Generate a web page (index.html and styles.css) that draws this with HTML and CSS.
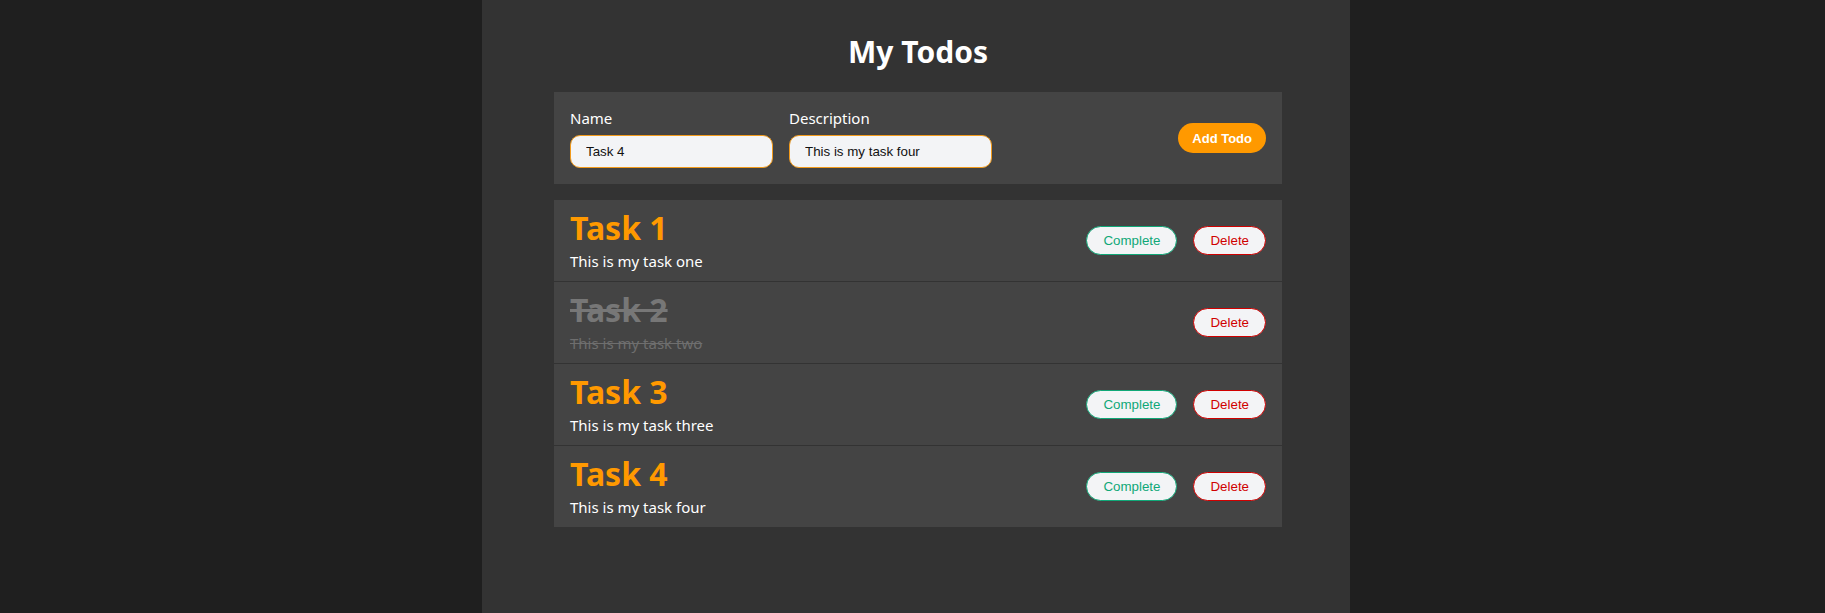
FILE: index.html
```html
<!DOCTYPE html>
<html lang="en">
<head>
<meta charset="utf-8">
<title>My Todos</title>
<link rel="stylesheet" href="styles.css">
</head>
<body>
<main class="page">
  <h1 class="title">My Todos</h1>
  <form class="add-form">
    <label class="field">
      <span class="field-label">Name</span>
      <input class="field-input" type="text" value="Task 4">
    </label>
    <label class="field">
      <span class="field-label">Description</span>
      <input class="field-input" type="text" value="This is my task four">
    </label>
    <button class="btn-add" type="button">Add Todo</button>
  </form>
  <ul class="todo-list">
    <li class="todo">
      <div class="todo-text">
        <div class="todo-name">Task 1</div>
        <div class="todo-desc">This is my task one</div>
      </div>
      <div class="todo-actions">
        <button class="btn btn-complete" type="button">Complete</button>
        <button class="btn btn-delete" type="button">Delete</button>
      </div>
    </li>
    <li class="todo done">
      <div class="todo-text">
        <div class="todo-name">Task 2</div>
        <div class="todo-desc">This is my task two</div>
      </div>
      <div class="todo-actions">
        <button class="btn btn-delete" type="button">Delete</button>
      </div>
    </li>
    <li class="todo">
      <div class="todo-text">
        <div class="todo-name">Task 3</div>
        <div class="todo-desc">This is my task three</div>
      </div>
      <div class="todo-actions">
        <button class="btn btn-complete" type="button">Complete</button>
        <button class="btn btn-delete" type="button">Delete</button>
      </div>
    </li>
    <li class="todo">
      <div class="todo-text">
        <div class="todo-name">Task 4</div>
        <div class="todo-desc">This is my task four</div>
      </div>
      <div class="todo-actions">
        <button class="btn btn-complete" type="button">Complete</button>
        <button class="btn btn-delete" type="button">Delete</button>
      </div>
    </li>
  </ul>
</main>
</body>
</html>
```

FILE: styles.css
```css
* { box-sizing: border-box; }

html, body {
  margin: 0;
  padding: 0;
  background: #1f1f1f;
  font-family: "Noto Sans", Lato, sans-serif;
  color: #ffffff;
}

.page {
  width: 868px;
  min-height: 100vh;
  margin-left: calc(50% - 430.5px);
  padding: 34px 68px 0 72px;
  background: #333333;
}

.title {
  margin: 0 0 22px;
  font-size: 30px;
  line-height: 36px;
  font-weight: 700;
  text-align: center;
  color: #ffffff;
}

.add-form {
  display: flex;
  align-items: center;
  padding: 16px;
  background: #444444;
  margin: 0;
}

.field {
  display: flex;
  flex-direction: column;
  gap: 7px;
}

.field + .field { margin-left: 16px; }

.field-label {
  font-size: 15px;
  line-height: 20px;
  color: #ffffff;
}

.field-input {
  width: 203px;
  height: 33px;
  padding: 0 15px;
  border: 1px solid #f29a1a;
  border-radius: 10px;
  background: #f3f4f6;
  font-family: "Liberation Sans", Arial, sans-serif;
  font-size: 13.333px;
  color: #111111;
  outline: none;
}

.btn-add {
  margin-left: auto;
  height: 30px;
  padding: 0 14px;
  border: none;
  border-radius: 15px;
  background: #ff9900;
  color: #ffffff;
  font-family: "Liberation Sans", Arial, sans-serif;
  font-size: 13px;
  font-weight: 700;
  cursor: pointer;
}

.todo-list {
  list-style: none;
  margin: 16px 0 0;
  padding: 0;
}

.todo {
  display: flex;
  align-items: center;
  justify-content: space-between;
  height: 81px;
  padding: 10px 16px;
  background: #444444;
}

.todo + .todo { border-top: 1px solid #333333; height: 82px; }

.todo-name {
  font-size: 32px;
  line-height: 36px;
  font-weight: 700;
  color: #ff9900;
}

.todo-desc {
  margin-top: 5px;
  font-size: 15px;
  line-height: 20px;
  color: #ffffff;
}

.done .todo-name {
  color: #777777;
  text-decoration: line-through;
}

.done .todo-desc {
  color: #6e6e6e;
  text-decoration: line-through;
}

.todo-actions {
  display: flex;
  align-items: center;
  gap: 16px;
}

.btn {
  height: 29px;
  padding: 0 16px;
  border-radius: 15px;
  background: #f3f4f6;
  font-family: "Liberation Sans", Arial, sans-serif;
  font-size: 13.333px;
  cursor: pointer;
}

.btn-complete {
  padding: 0 16px;
  border: 1px solid #10a878;
  color: #10a878;
}

.btn-delete {
  border: 1px solid #d00000;
  color: #d00000;
}
```
